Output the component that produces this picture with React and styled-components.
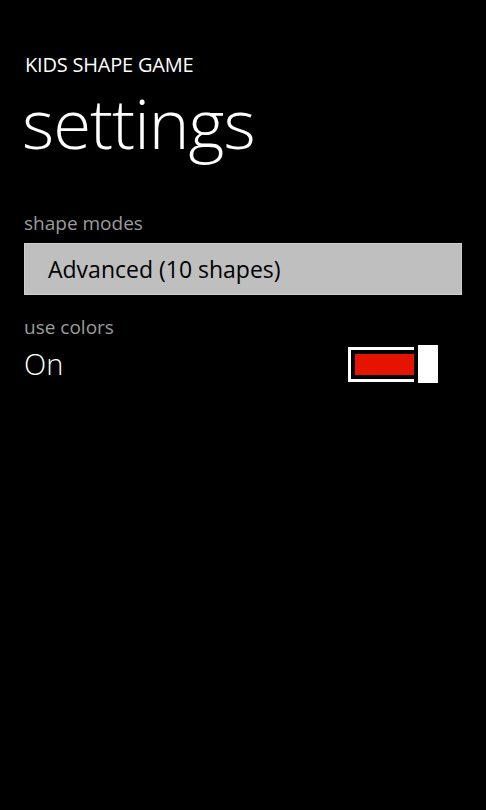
import React from 'react'
import styled, { createGlobalStyle } from 'styled-components'

const GlobalStyle = createGlobalStyle`
  html, body {
    margin: 0;
    padding: 0;
    background: #000;
  }
  body {
    font-family: "Open Sans", "Noto Sans", "Liberation Sans", sans-serif;
    color: #fff;
  }
`

export default function App() {
  return (
    <>
      <GlobalStyle />
      <Page>
        <AppTitle>KIDS SHAPE GAME</AppTitle>
        <PageTitle>settings</PageTitle>

        <Section>
          <Label>shape modes</Label>
          <Picker>Advanced (10 shapes)</Picker>
        </Section>

        <Section $gap={6}>
          <Label>use colors</Label>
          <ToggleRow>
            <ToggleValue>On</ToggleValue>
            <Toggle>
              <Track>
                <Fill />
              </Track>
              <Thumb />
            </Toggle>
          </ToggleRow>
        </Section>
      </Page>
    </>
  )
}

const Page = styled.div`
  width: 486px;
  height: 810px;
  box-sizing: border-box;
  padding: 52px 24px 0 24px;
  display: flex;
  flex-direction: column;
`

const AppTitle = styled.div`
  font-size: 20px;
  line-height: 26px;
  letter-spacing: -0.2px;
  margin-left: 1px;
`

const PageTitle = styled.h1`
  margin: 8px 0 0 -2px;
  font-size: 69px;
  font-weight: 300;
  line-height: 72px;
  letter-spacing: -1px;
`

const Section = styled.div`
  display: flex;
  flex-direction: column;
  gap: ${(p) => p.$gap ?? 8}px;
  margin-top: 53px;

  & + & {
    margin-top: 20px;
  }
`

const Label = styled.div`
  font-size: 19px;
  line-height: 24px;
  color: #9c9c9c;
`

const Picker = styled.div`
  height: 52px;
  box-sizing: border-box;
  background: #bfbfbf;
  border: 1px solid #cfcfcf;
  color: #000;
  font-size: 23px;
  display: flex;
  align-items: center;
  padding-left: 23px;
`

const ToggleRow = styled.div`
  display: flex;
  align-items: center;
  justify-content: space-between;
  padding-right: 24px;
`

const ToggleValue = styled.div`
  font-size: 29px;
  font-weight: 300;
  line-height: 36px;
`

const Toggle = styled.div`
  display: flex;
  align-items: center;
  gap: 4px;
`

const Track = styled.div`
  width: 66px;
  height: 35px;
  box-sizing: border-box;
  border: 3px solid #fff;
  border-right: none;
  padding: 4px 0 4px 4px;
  display: flex;
`

const Fill = styled.div`
  flex: 1;
  background: #e51400;
`

const Thumb = styled.div`
  width: 20px;
  height: 38px;
  background: #fff;
`
